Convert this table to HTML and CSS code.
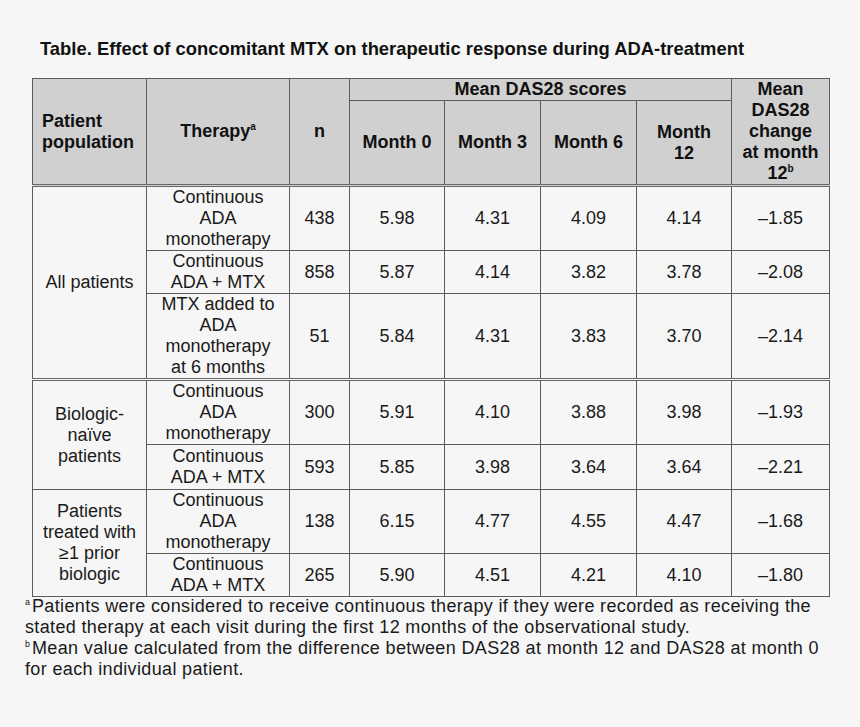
FILE: index.html
```html
<!DOCTYPE html>
<html lang="en">
<head>
<meta charset="utf-8">
<title>Effect of concomitant MTX</title>
<link rel="stylesheet" href="styles.css">
</head>
<body>
<div class="page">
  <h1 class="title">Table. Effect of concomitant MTX on therapeutic response during ADA-treatment</h1>
  <table class="data">
    <colgroup>
      <col class="c-pop"><col class="c-ther"><col class="c-n"><col class="c-m0"><col class="c-m3"><col class="c-m6"><col class="c-m12"><col class="c-chg">
    </colgroup>
    <thead>
      <tr class="h1">
        <th rowspan="2" class="left">Patient population</th>
        <th rowspan="2">Therapy<sup>a</sup></th>
        <th rowspan="2">n</th>
        <th colspan="4" class="group">Mean DAS28 scores</th>
        <th rowspan="2">Mean<br>DAS28<br>change<br>at month<br>12<sup>b</sup></th>
      </tr>
      <tr class="h2">
        <th>Month 0</th>
        <th>Month 3</th>
        <th>Month 6</th>
        <th>Month<br>12</th>
      </tr>
    </thead>
    <tbody>
      <tr class="r64">
        <td rowspan="3">All patients</td>
        <td class="ther">Continuous ADA monotherapy</td>
        <td>438</td><td>5.98</td><td>4.31</td><td>4.09</td><td>4.14</td><td>–1.85</td>
      </tr>
      <tr class="r42">
        <td class="ther">Continuous ADA + MTX</td>
        <td>858</td><td>5.87</td><td>4.14</td><td>3.82</td><td>3.78</td><td>–2.08</td>
      </tr>
      <tr class="r84">
        <td class="ther">MTX added to ADA monotherapy at 6 months</td>
        <td>51</td><td>5.84</td><td>4.31</td><td>3.83</td><td>3.70</td><td>–2.14</td>
      </tr>
    </tbody>
    <tbody class="grp">
      <tr class="r64">
        <td rowspan="2" class="pop">Biologic-naïve patients</td>
        <td class="ther">Continuous ADA monotherapy</td>
        <td>300</td><td>5.91</td><td>4.10</td><td>3.88</td><td>3.98</td><td>–1.93</td>
      </tr>
      <tr class="r45">
        <td class="ther">Continuous ADA + MTX</td>
        <td>593</td><td>5.85</td><td>3.98</td><td>3.64</td><td>3.64</td><td>–2.21</td>
      </tr>
    </tbody>
    <tbody>
      <tr class="r64">
        <td rowspan="2" class="pop">Patients treated with ≥1 prior biologic</td>
        <td class="ther">Continuous ADA monotherapy</td>
        <td>138</td><td>6.15</td><td>4.77</td><td>4.55</td><td>4.47</td><td>–1.68</td>
      </tr>
      <tr class="r42">
        <td class="ther">Continuous ADA + MTX</td>
        <td>265</td><td>5.90</td><td>4.51</td><td>4.21</td><td>4.10</td><td>–1.80</td>
      </tr>
    </tbody>
  </table>
  <div class="notes">
    <p><sup class="fn">a</sup>Patients were considered to receive continuous therapy if they were recorded as receiving the stated therapy at each visit during the first 12 months of the observational study.</p>
    <p><sup class="fn">b</sup>Mean value calculated from the difference between DAS28 at month 12 and DAS28 at month 0 for each individual patient.</p>
  </div>
</div>
</body>
</html>
```

FILE: styles.css
```css
html, body {
  margin: 0;
  padding: 0;
  background: #f6f6f6;
}

body {
  font-family: "Liberation Sans", Arimo, Arial, Helvetica, sans-serif;
  color: #1a1a1a;
}

.page {
  width: 860px;
  height: 727px;
  padding-top: 38px;
  box-sizing: border-box;
}

.title {
  margin: 0 0 19px 40px;
  font-size: 18.4px;
  line-height: 21px;
  font-weight: bold;
  color: #111;
}

.data {
  margin-left: 32px;
  width: 797px;
  table-layout: fixed;
  border-collapse: collapse;
  border: 1px solid #555;
  font-size: 18px;
  line-height: 21px;
}

.c-pop { width: 114px; }
.c-ther { width: 143px; }
.c-n { width: 60px; }
.c-m0 { width: 95px; }
.c-m3 { width: 96px; }
.c-m6 { width: 96px; }
.c-m12 { width: 95px; }
.c-chg { width: 98px; }

.data th,
.data td {
  border: 1px solid #5c5c5c;
  padding: 0 4px;
  text-align: center;
  vertical-align: middle;
}

.data th {
  background: #d0d0d0;
  font-weight: bold;
  color: #111;
}

.data th.left {
  text-align: left;
  padding-left: 9px;
}

.data thead {
  border-bottom: 3px double #666;
}

.h1 { height: 22px; }
.h2 { height: 85px; }

.data td.ther {
  padding: 0 9px;
}

.data td.pop {
  padding: 0 8px;
}

.r64 { height: 64px; }
.r42 { height: 42px; }
.r45 { height: 45px; }
.r84 { height: 84px; }

.data tbody.grp {
  border-top: 3px double #666;
}

sup {
  font-size: 10px;
  line-height: 0;
  vertical-align: 7px;
}

.notes {
  margin-left: 25px;
  margin-top: -1px;
  font-size: 18px;
  letter-spacing: 0.35px;
  line-height: 21px;
  color: #1a1a1a;
  width: 810px;
}

.notes p {
  margin: 0;
}

.notes sup.fn {
  display: inline-block;
  font-size: 9px;
  line-height: 9px;
  letter-spacing: 0;
  margin-right: 2px;
  vertical-align: top;
  margin-top: 2px;
}
```
